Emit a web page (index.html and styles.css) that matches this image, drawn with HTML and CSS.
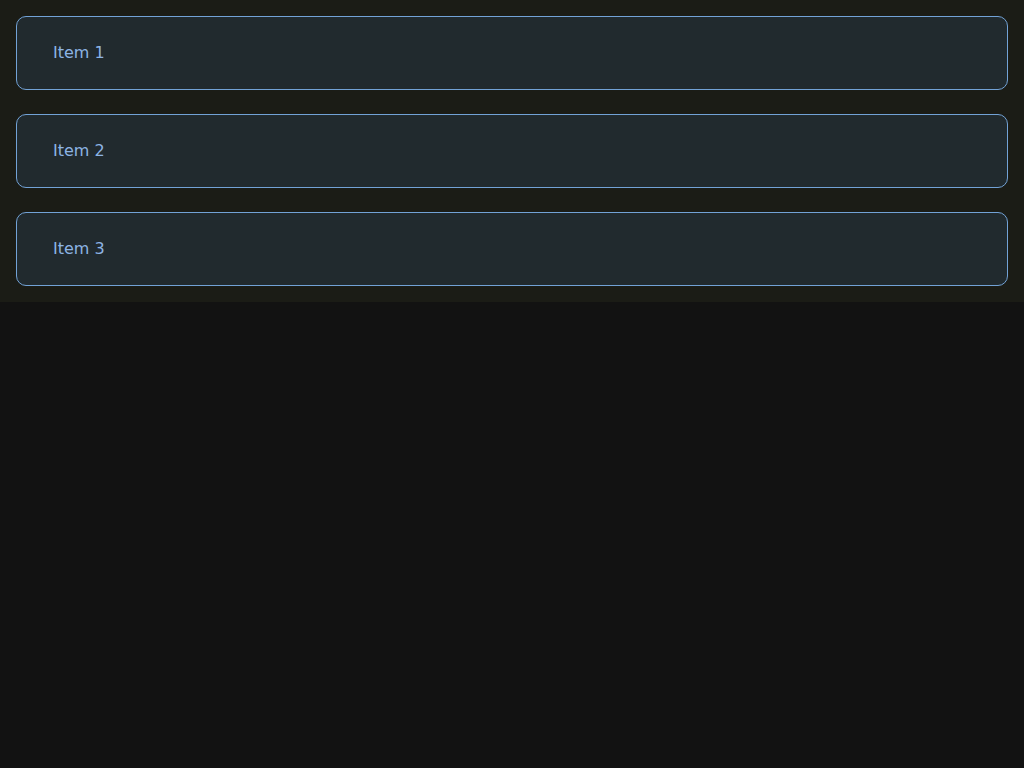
FILE: index.html
```html
<!DOCTYPE html>
<html>
<head>
<meta charset="utf-8">
<link rel="stylesheet" href="styles.css">
</head>
<body>
<div class="list">
  <div class="item">Item 1</div>
  <div class="item">Item 2</div>
  <div class="item">Item 3</div>
</div>
</body>
</html>
```
FILE: styles.css
```css
html, body {
  margin: 0;
  padding: 0;
  background: #121212;
  font-family: "DejaVu Sans", sans-serif;
}
.list {
  background: #1b1c16;
  padding: 16px;
  display: flex;
  flex-direction: column;
  gap: 24px;
}
.item {
  background: #212a2e;
  border: 1px solid #72a2d6;
  border-radius: 10px;
  padding: 24px 36px;
  font-size: 16px;
  line-height: 24px;
  color: #8db4e4;
}
```
